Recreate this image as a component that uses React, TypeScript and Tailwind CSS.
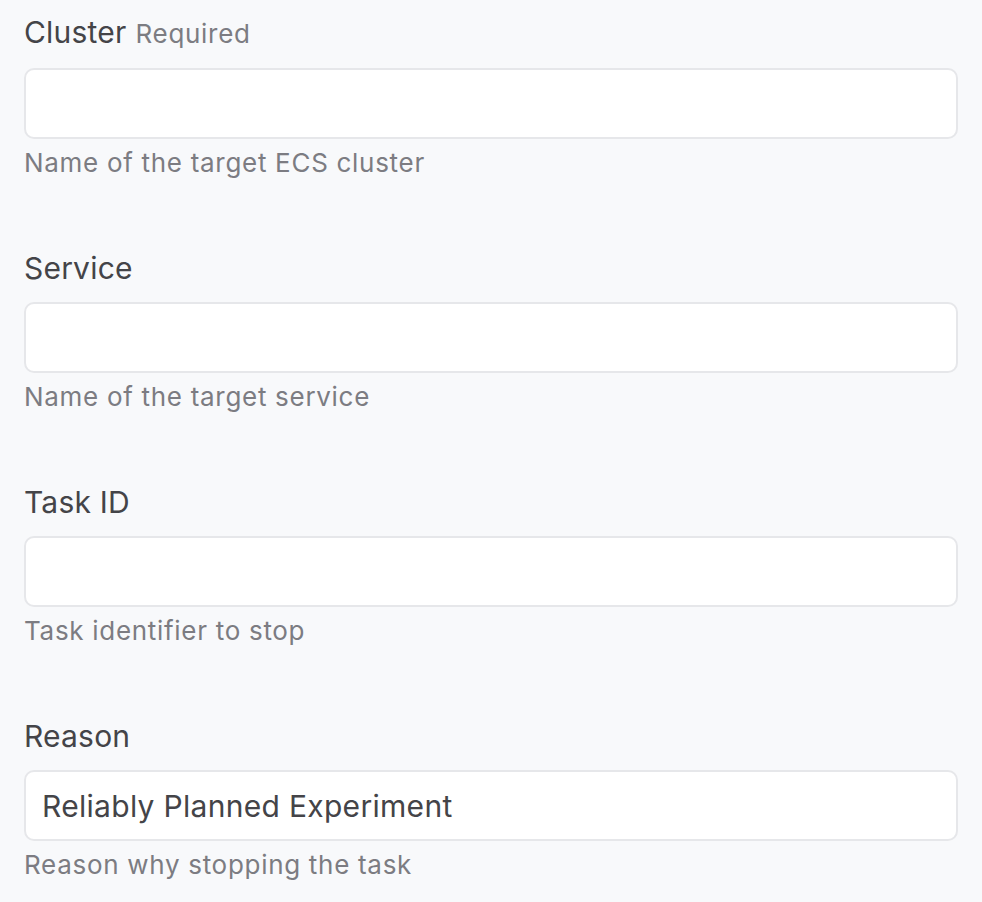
import React from 'react';

interface Field {
    label: string;
    required?: boolean;
    value?: string;
    help: string;
}

const fields: Field[] = [
    { label: 'Cluster', required: true, help: 'Name of the target ECS cluster' },
    { label: 'Service', help: 'Name of the target service' },
    { label: 'Task ID', help: 'Task identifier to stop' },
    { label: 'Reason', value: 'Reliably Planned Experiment', help: 'Reason why stopping the task' },
];

const App = () => {
    return (
        <div
            className="min-h-screen bg-[#f8f9fb] px-6 pt-[14px]"
            style={{ fontFamily: 'Inter, "Noto Sans", sans-serif' }}
        >
            <div className="flex flex-col gap-[71px]">
                {fields.map((field) => (
                    <div key={field.label} className="flex flex-col">
                        <label className="text-[30px] leading-[36px] tracking-[0.2px] text-[#444448]">
                            {field.label}
                            {field.required && (
                                <span className="ml-[9px] text-[26px] tracking-[0.7px] text-[#7c7c82]">Required</span>
                            )}
                        </label>
                        <input
                            type="text"
                            defaultValue={field.value}
                            className="mt-4 h-[71px] w-full rounded-[10px] border-2 border-[#e6e7ea] bg-white px-4 text-[30px] tracking-[0.3px] text-[#444448] outline-none"
                        />
                        <p className="mt-2 text-[26px] leading-[32px] tracking-[0.7px] text-[#7c7c82]">{field.help}</p>
                    </div>
                ))}
            </div>
        </div>
    );
};

export default App;
